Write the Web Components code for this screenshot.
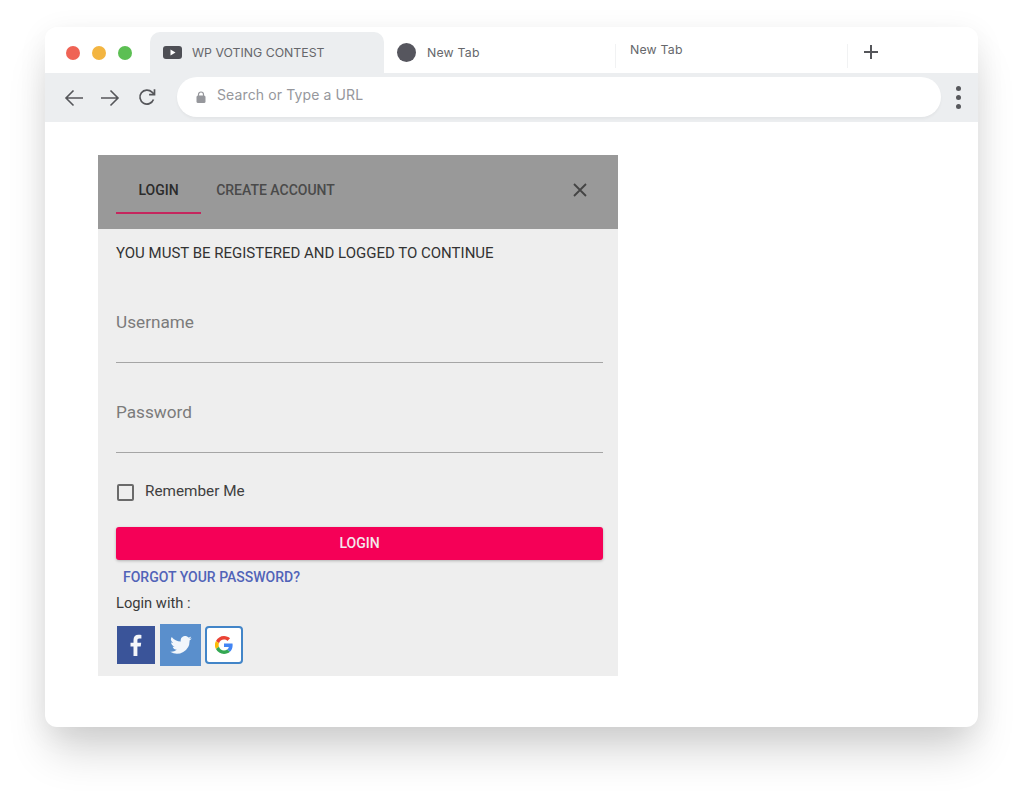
<!DOCTYPE html>
<html>
<head>
<meta charset="utf-8">
<title>WP Voting Contest</title>
<style>
  html, body { margin: 0; background: #fff; }
  body { padding: 27px 46px 64px 45px; height: 700px; overflow: hidden; }
</style>
</head>
<body>
<browser-window>
  <login-dialog></login-dialog>
</browser-window>
<script>
class BrowserTab extends HTMLElement {
  constructor() {
    super();
    this.attachShadow({ mode: "open" });
    this.shadowRoot.innerHTML = `
      <style>
        :host { display: flex; align-items: center; box-sizing: border-box; height: 41px; font: 12.3px/16px Inter, "Open Sans", sans-serif; color: #66676b; white-space: nowrap; }
        :host([active]) { background: #eceef0; border-radius: 10px 10px 0 0; }
      </style>
      <slot name="icon"></slot><slot></slot>`;
  }
}
customElements.define("browser-tab", BrowserTab);

class BrowserWindow extends HTMLElement {
  constructor() {
    super();
    this.attachShadow({ mode: "open" });
    this.shadowRoot.innerHTML = `
      <style>
        :host { display: block; width: 933px; height: 700px; background: #fff; border-radius: 12px; box-shadow: 0 30px 44px -6px rgba(0,0,0,.16), 0 6px 30px rgba(0,0,0,.07); }
        .strip { display: flex; height: 46px; align-items: flex-end; }
        .lights { display: flex; gap: 12px; width: 105px; box-sizing: border-box; padding: 5px 0 0 21px; align-self: center; }
        .lights i { width: 14px; height: 14px; border-radius: 50%; }
        .tab1 { width: 234px; padding-left: 13px; }
        .tab1 svg { margin-right: 10px; }
        .tab2 { width: 231px; padding-left: 13px; }
        .tab2 i { width: 19px; height: 19px; border-radius: 50%; background: #56565e; margin-right: 11px; margin-top: -1px; }
        .tab2 span { letter-spacing: .2px; }
        .sep { width: 1px; height: 24px; background: #f1f2f3; align-self: flex-end; margin-bottom: 5px; }
        .tab3 { width: 231px; padding-left: 14px; }
        .tab3 span { margin-top: -5px; letter-spacing: .2px; }
        .plus { width: 45px; display: flex; justify-content: center; align-self: center; padding-top: 4px; }
        .bar { display: flex; align-items: center; height: 49px; background: #eceef0; }
        .nav { display: flex; align-items: center; width: 132px; box-sizing: border-box; padding-left: 19px; gap: 16px; }
        .nav .reload { margin-left: 2px; margin-top: -1px; }
        .url { display: flex; align-items: center; width: 764px; height: 40px; margin-top: -1px; background: #fff; border-radius: 20px; box-shadow: 0 2px 3px rgba(0,0,0,.04); box-sizing: border-box; padding-left: 19px; font: 14px/16px Inter, "Open Sans", sans-serif; letter-spacing: .12px; color: #96979c; }
        .url svg { margin-right: 11px; }
        .url span { margin-top: -4px; }
        .dots { flex: 1; display: flex; flex-direction: column; align-items: center; gap: 4px; margin-left: -2px; }
        .dots i { width: 5px; height: 5px; border-radius: 50%; background: #57585c; }
        .page { padding: 33px 0 0 53px; }
      </style>
      <div class="strip">
        <div class="lights"><i style="background:#ef6355"></i><i style="background:#f3b541"></i><i style="background:#5cbf53"></i></div>
        <browser-tab active class="tab1">
          <svg slot="icon" width="19" height="15" viewBox="0 0 19 15"><rect y="1" width="19" height="13" rx="3" fill="#4e4f55"/><path d="M7.5 4.6l5 2.9-5 2.9z" fill="#fff"/></svg>
          WP VOTING CONTEST
        </browser-tab>
        <browser-tab class="tab2"><i slot="icon"></i><span>New Tab</span></browser-tab>
        <div class="sep"></div>
        <browser-tab class="tab3"><span>New Tab</span></browser-tab>
        <div class="sep"></div>
        <div class="plus"><svg width="16" height="16" viewBox="0 0 16 16"><path d="M8 1v14M1 8h14" stroke="#55565a" stroke-width="2"/></svg></div>
      </div>
      <div class="bar">
        <div class="nav">
          <svg width="20" height="18" viewBox="0 0 20 18" fill="none" stroke="#55565a" stroke-width="1.6"><path d="M19 9H2M9.5 1.5L2 9l7.5 7.5"/></svg>
          <svg width="20" height="18" viewBox="0 0 20 18" fill="none" stroke="#55565a" stroke-width="1.6"><path d="M1 9h17M10.5 1.5L18 9l-7.5 7.5"/></svg>
          <svg class="reload" width="18" height="18" viewBox="0 0 18 18" fill="none" stroke="#55565a" stroke-width="1.7"><path d="M15.5 11.5A7 7 0 1 1 14 4.2L16 6"/><path d="M16.5 1.2V6.6h-5.4"/></svg>
        </div>
        <div class="url">
          <svg width="10" height="12" viewBox="0 0 10 12"><path d="M2.5 5V3.5a2.5 2.5 0 0 1 5 0V5" fill="none" stroke="#96979c" stroke-width="1.2"/><rect y="4.5" x=".5" width="9" height="7.5" rx="1.5" fill="#96979c"/></svg>
          <span>Search or Type a URL</span>
        </div>
        <div class="dots"><i></i><i></i><i></i></div>
      </div>
      <div class="page"><slot></slot></div>`;
  }
}
customElements.define("browser-window", BrowserWindow);

class LoginField extends HTMLElement {
  constructor() {
    super();
    this.attachShadow({ mode: "open" });
    this.shadowRoot.innerHTML = `
      <style>
        :host { display: block; height: 64px; border-bottom: 1px solid #a5a5a5; font: 17.2px/20px Roboto, sans-serif; color: #7b7b7b; }
        div { padding-top: 14px; }
      </style>
      <div><slot></slot></div>`;
  }
}
customElements.define("login-field", LoginField);

class LoginDialog extends HTMLElement {
  constructor() {
    super();
    this.attachShadow({ mode: "open" });
    this.shadowRoot.innerHTML = `
      <style>
        :host { display: block; width: 520px; height: 521px; background: #eee; font-family: Roboto, sans-serif; color: #3a3a3a; }
        header { display: flex; height: 74px; background: #999; padding: 0 18px; box-sizing: border-box; font-size: 14px; font-weight: 500; }
        .tab { display: flex; align-items: center; justify-content: center; box-sizing: border-box; margin-top: 12px; height: 47px; }
        .tab.on { width: 85px; color: #2b2b2b; border-bottom: 2px solid #c5265e; }
        .tab.off { width: 149px; padding-bottom: 2px; color: #4a4a4a; }
        .close { margin-left: auto; align-self: center; margin-right: 13px; margin-top: -5px; display: flex; }
        main { padding: 0 15px 0 18px; }
        .note { font-size: 15px; line-height: 20px; padding-top: 14px; color: #333; }
        .f1 { margin-top: 35px; }
        .f2 { margin-top: 25px; }
        .remember { display: flex; align-items: center; height: 24px; margin-top: 26px; padding-left: 1px; font-size: 15.3px; color: #3f3f3f; }
        .box { width: 13px; height: 13px; border: 2px solid #6a6a6a; border-radius: 2px; margin-right: 11px; margin-top: 2px; }
        .btn { height: 33px; box-sizing: border-box; padding-bottom: 2px; margin-top: 24px; background: #f50057; border-radius: 3px; color: #f4e8ec; font-size: 14px; font-weight: 500; display: flex; align-items: center; justify-content: center; box-shadow: 0 1px 3px rgba(0,0,0,.25); }
        .forgot { font-size: 14px; font-weight: 500; line-height: 18px; margin-top: 8px; padding-left: 7px; color: #5163b8; }
        .with { font-size: 14.7px; line-height: 20px; margin-top: 7px; color: #3a3a3a; }
        .social { display: flex; align-items: center; gap: 4px; margin-top: 11px; padding-left: 1px; }
        .social > * { display: flex; align-items: center; justify-content: center; box-sizing: border-box; }
        .fb { width: 38px; height: 38px; background: #3a5499; }
        .tw { width: 41px; height: 42px; margin-left: 1px; background: #5a8fcc; }
        .go { width: 38px; height: 38px; background: #fff; border: 2px solid #4285c8; border-radius: 4px; }
      </style>
      <header>
        <div class="tab on">LOGIN</div>
        <div class="tab off">CREATE ACCOUNT</div>
        <div class="close"><svg width="14" height="14" viewBox="0 0 14 14"><path d="M1 1l12 12M13 1L1 13" stroke="#444" stroke-width="1.8"/></svg></div>
      </header>
      <main>
        <div class="note">YOU MUST BE REGISTERED AND LOGGED TO CONTINUE</div>
        <login-field class="f1">Username</login-field>
        <login-field class="f2">Password</login-field>
        <div class="remember"><span class="box"></span>Remember Me</div>
        <div class="btn">LOGIN</div>
        <div class="forgot">FORGOT YOUR PASSWORD?</div>
        <div class="with">Login with :</div>
        <div class="social">
          <div class="fb"><svg width="12" height="22" viewBox="0 0 12 22"><path d="M3.5 22V12.500H.5V8.700h3V6c0-3.400 2-5.200 4.900-5.200 1.400 0 2.600.1 3 .2v3.400H9.300c-1.600 0-1.900.8-1.900 1.900v2.400h3.800l-.5 3.800H7.400V22z" fill="#f4f6fa"/></svg></div>
          <div class="tw"><svg width="22" height="18" viewBox="0 0 24 20"><path d="M24 2.400a9.800 9.800 0 0 1-2.800.8A4.900 4.900 0 0 0 23.300.5a9.800 9.800 0 0 1-3.100 1.200 4.900 4.900 0 0 0-8.400 4.500A14 14 0 0 1 1.700 1a4.900 4.900 0 0 0 1.500 6.600 4.900 4.900 0 0 1-2.200-.6c0 2.400 1.700 4.400 3.900 4.900a4.900 4.900 0 0 1-2.200.1 4.900 4.900 0 0 0 4.600 3.400A9.900 9.900 0 0 1 0 17.400 14 14 0 0 0 21.500 5c1-.7 1.900-1.600 2.500-2.600z" fill="#f2f6fb"/></svg></div>
          <div class="go"><svg width="18" height="18" viewBox="0 0 48 48"><path fill="#EA4335" d="M24 9.500c3.500 0 6.700 1.200 9.200 3.600l6.900-6.900C35.900 2.400 30.500 0 24 0 14.600 0 6.500 5.400 2.600 13.200l8 6.200C12.400 13.700 17.700 9.500 24 9.500z"/><path fill="#4285F4" d="M47 24.500c0-1.600-.1-3.100-.4-4.500H24v9h12.900c-.6 3-2.200 5.500-4.700 7.200l7.700 6C44.400 38 47 31.800 47 24.500z"/><path fill="#FBBC05" d="M10.500 28.600A14.500 14.500 0 0 1 10.500 19.400l-8-6.200a24 24 0 0 0 0 21.600z"/><path fill="#34A853" d="M24 48c6.500 0 11.900-2.100 15.900-5.800l-7.700-6c-2.200 1.400-4.900 2.300-8.200 2.300-6.300 0-11.600-4.200-13.500-9.900l-8 6.200C6.500 42.600 14.600 48 24 48z"/></svg></div>
        </div>
      </main>`;
  }
}
customElements.define("login-dialog", LoginDialog);
</script>
</body>
</html>
